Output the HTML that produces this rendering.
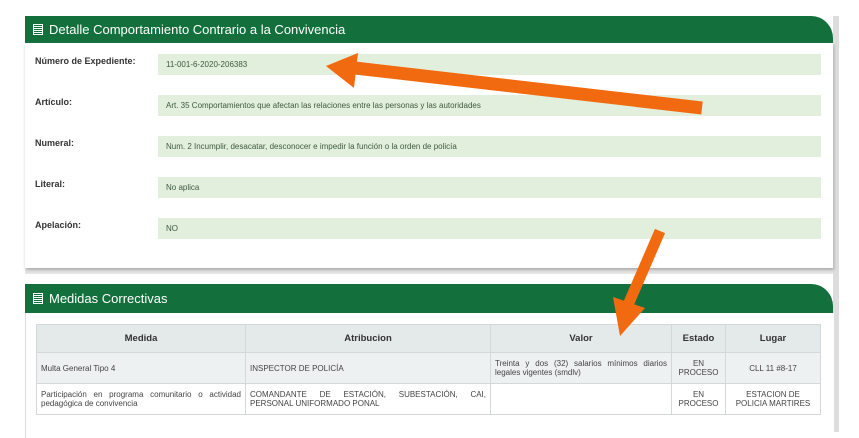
<!DOCTYPE html>
<html><head><meta charset="utf-8"><style>
body{margin:0;width:859px;height:438px;background:#fff;position:relative;overflow:hidden;font-family:"Liberation Sans",sans-serif;}
.hd{position:absolute;left:25px;width:808px;background:#13703d;color:#fff;border-top-right-radius:22px;font-size:13px;}
.panel{position:absolute;left:25px;width:808px;background:#fff;box-shadow:1px 2px 3px #aaa;}
.lbl{position:absolute;left:35px;font-size:9px;font-weight:bold;color:#333;}
.fld{position:absolute;left:158px;width:663px;height:21px;background:#e2efdc;font-size:8px;color:#3d5a3d;line-height:21px;padding-left:8px;box-sizing:border-box;}
table{position:absolute;left:36px;top:324px;width:785px;border-collapse:collapse;font-size:8px;color:#444;}
td,th{border:1px solid #d4d8d8;padding:2px 4px;}
th{background:#e4eaea;height:23px;font-size:9.5px;color:#333;}
tr.r1 td{background:#eef1f1;height:26px}
tr.r2 td{height:26px}
.ic{display:inline-block;width:10px;height:11px;border:1.5px solid #fff;box-sizing:border-box;margin:0 6px 0 8px;vertical-align:-1px;background:repeating-linear-gradient(#13703d 0 1px,#fff 1px 2px);}
</style></head><body>
<div style="position:absolute;left:833px;top:16px;width:6px;height:416px;background:#ddd"></div>
<div style="position:absolute;left:25px;top:268px;width:808px;height:6px;background:#e6e6e6"></div>
<div class="hd" style="top:16px;height:27px;line-height:27px"><span class="ic"></span>Detalle Comportamiento Contrario a la Convivencia</div>
<div class="panel" style="top:43px;height:225px"></div>
<div class="lbl" style="top:56px">Número de Expediente:</div>
<div class="fld" style="top:54px">11-001-6-2020-206383</div>
<div class="lbl" style="top:97px">Artículo:</div>
<div class="fld" style="top:95px">Art. 35 Comportamientos que afectan las relaciones entre las personas y las autoridades</div>
<div class="lbl" style="top:138px">Numeral:</div>
<div class="fld" style="top:136px">Num. 2 Incumplir, desacatar, desconocer e impedir la función o la orden de policía</div>
<div class="lbl" style="top:179px">Literal:</div>
<div class="fld" style="top:177px">No aplica</div>
<div class="lbl" style="top:220px">Apelación:</div>
<div class="fld" style="top:218px">NO</div>
<div class="hd" style="top:284px;height:29px;line-height:29px"><span class="ic"></span>Medidas Correctivas</div>
<div class="panel" style="top:313px;height:125px;box-shadow:none;border-left:1px solid #ddd"></div>
<table>
<tr><th style="width:200px">Medida</th><th style="width:236px">Atribucion</th><th style="width:172px">Valor</th><th style="width:45px">Estado</th><th>Lugar</th></tr>
<tr class="r1"><td>Multa General Tipo 4</td><td>INSPECTOR DE POLICÍA</td><td style="text-align:justify">Treinta y dos (32) salarios mínimos diarios legales vigentes (smdlv)</td><td style="text-align:center">EN PROCESO</td><td style="text-align:center">CLL 11 #8-17</td></tr>
<tr class="r2"><td style="text-align:justify">Participación en programa comunitario o actividad pedagógica de convivencia</td><td style="text-align:justify">COMANDANTE DE ESTACIÓN, SUBESTACIÓN, CAI, PERSONAL UNIFORMADO PONAL</td><td></td><td style="text-align:center">EN PROCESO</td><td style="text-align:center">ESTACION DE POLICIA MARTIRES</td></tr>
</table>
<svg style="position:absolute;left:0;top:0" width="859" height="438">
<line x1="702" y1="108" x2="355" y2="68" stroke="#f26a10" stroke-width="13"/>
<polygon points="326,66 358,53 354,88" fill="#f26a10"/>
<line x1="660" y1="231" x2="628" y2="305" stroke="#f26a10" stroke-width="11"/>
<polygon points="620,336 613,297 645,308" fill="#f26a10"/>
</svg>
</body></html>
